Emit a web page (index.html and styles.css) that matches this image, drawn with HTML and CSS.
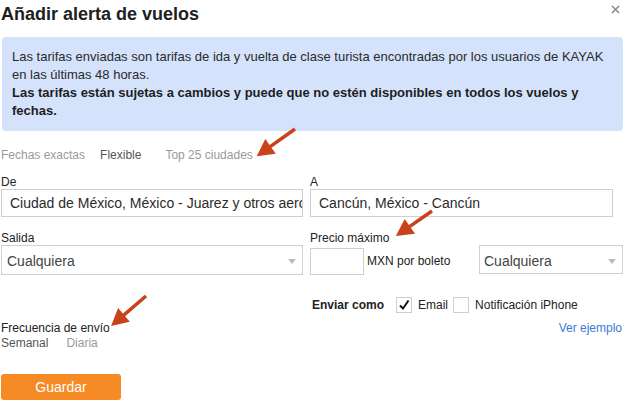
FILE: index.html
```html
<!DOCTYPE html>
<html lang="es">
<head>
  <meta charset="UTF-8">
  <title>Añadir alerta de vuelos</title>
  <link rel="stylesheet" href="styles.css">
</head>
<body>
  <div class="dialogo">
    <div class="cabecera">
      <h2>Añadir alerta de vuelos</h2>
      <svg class="cerrar" width="9" height="9" viewBox="0 0 9 9">
        <path d="M1 1 L8 8 M8 1 L1 8" stroke="#8c8c8c" stroke-width="1.6" />
      </svg>
    </div>

    <div class="aviso">
      Las tarifas enviadas son tarifas de ida y vuelta de clase turista encontradas por los usuarios de KAYAK<br>
      en las últimas 48 horas.<br>
      <strong>Las tarifas están sujetas a cambios y puede que no estén disponibles en todos los vuelos y<br>fechas.</strong>
    </div>

    <div class="pestanas">
      <span>Fechas exactas</span>
      <span class="activa">Flexible</span>
      <span>Top 25 ciudades</span>
    </div>

    <div class="rejilla">
      <div class="campo">
        <label>De</label>
        <div class="entrada">Ciudad de México, México - Juarez y otros aeropuertos</div>
      </div>
      <div class="campo">
        <label>A</label>
        <div class="entrada corta">Cancún, México - Cancún</div>
      </div>
    </div>

    <div class="rejilla fila-precio">
      <div class="campo">
        <label>Salida</label>
        <div class="selector">Cualquiera<span class="flecha"></span></div>
      </div>
      <div class="campo">
        <label>Precio máximo</label>
        <div class="precio">
          <div class="caja-precio"></div>
          <span class="moneda">MXN por boleto</span>
          <div class="selector chico">Cualquiera<span class="flecha"></span></div>
        </div>
      </div>
    </div>

    <div class="envio">
      <div class="canales">
        <b>Enviar como</b>
        <span class="casilla marcada">
          <svg width="12" height="12" viewBox="0 0 12 12"><path d="M2 6.5 L5 9.5 L10.5 1.5" fill="none" stroke="#111" stroke-width="2" /></svg>
        </span>
        <span>Email</span>
        <span class="casilla"></span>
        <span>Notificación iPhone</span>
      </div>
      <label class="frecuencia">Frecuencia de envío</label>
      <a class="ejemplo" href="#">Ver ejemplo</a>
      <div class="opciones">
        <span class="activa">Semanal</span>
        <span>Diaria</span>
      </div>
    </div>

    <button class="guardar">Guardar</button>

    <!-- flechas de anotación sobre la captura -->
    <svg class="flechas" width="631" height="402" viewBox="0 0 631 402">
      <g fill="#c8431b" stroke="#c8431b">
        <g transform="translate(295 129) rotate(144.6)">
          <line x1="0" y1="0" x2="33" y2="0" stroke-width="3.5" />
          <polygon points="47,0 30,-9 30,9" stroke="none" />
        </g>
        <g transform="translate(432 211) rotate(145.2)">
          <line x1="0" y1="0" x2="30" y2="0" stroke-width="3.5" />
          <polygon points="44,0 27,-9 27,9" stroke="none" />
        </g>
        <g transform="translate(146 296) rotate(139.4)">
          <line x1="0" y1="0" x2="32" y2="0" stroke-width="3.5" />
          <polygon points="46,0 29,-9 29,9" stroke="none" />
        </g>
      </g>
    </svg>
  </div>
</body>
</html>
```

FILE: styles.css
```css
html, body {
  margin: 0;
  padding: 0;
  background: #fff;
  font-family: "Liberation Sans", Arial, sans-serif;
  color: #222;
}

.dialogo {
  position: relative;
  width: 622px;
  height: 402px;
  padding-left: 1px;
}

.cabecera {
  display: flex;
  justify-content: space-between;
  align-items: flex-start;
  padding-top: 3px;
}

.cabecera h2 {
  margin: 0;
  font-size: 18px;
  line-height: 22px;
  font-weight: bold;
  color: #1e1e1e;
}

.cerrar {
  margin-top: 2px;
  margin-right: 3px;
}

.aviso {
  margin-top: 12px;
  margin-left: 1px;
  background: #d4e3fb;
  border-radius: 4px;
  padding: 11px 10px 11px 10px;
  font-size: 13px;
  line-height: 18px;
  color: #2a2a2a;
}

.aviso strong { color: #1e1e1e; }

.pestanas {
  display: flex;
  gap: 15px;
  margin-top: 16px;
  font-size: 12px;
  line-height: 16px;
  color: #9a9a9a;
}

.pestanas .activa { color: #555; margin-right: 9px; }

.rejilla {
  display: grid;
  grid-template-columns: 302px 1fr;
  column-gap: 7px;
  margin-top: 12px;
}

.campo label {
  display: block;
  font-size: 12px;
  line-height: 14px;
  margin-bottom: 0;
  color: #222;
}

.entrada {
  height: 26px;
  border: 1px solid #cfcfcf;
  padding: 0 8px;
  font-size: 14px;
  line-height: 27px;
  color: #2b2b2b;
  white-space: nowrap;
  overflow: hidden;
}

.entrada.corta { width: 285px; }

.fila-precio { margin-top: 14px; }

.selector {
  position: relative;
  height: 28px;
  border: 1px solid #d0d0d0;
  padding: 0 5px;
  font-size: 14px;
  line-height: 30px;
  color: #444;
}

.flecha {
  position: absolute;
  right: 6px;
  top: 13px;
  border-left: 4px solid transparent;
  border-right: 4px solid transparent;
  border-top: 5px solid #bdbdbd;
}

.precio {
  display: flex;
  align-items: center;
  height: 30px;
}

.caja-precio {
  width: 52px;
  height: 25px;
  border: 1px solid #cfcfcf;
  margin-top: 2px;
}

.moneda {
  font-size: 12px;
  margin-left: 3px;
  margin-top: 2px;
  width: 112px;
}

.selector.chico {
  flex: 1;
  height: 27px;
  margin-top: -1px;
  padding-left: 4px;
}

.envio {
  display: grid;
  grid-template-columns: 302px 1fr;
  grid-template-rows: 20px 14px 14px;
  column-gap: 7px;
  margin-top: 20px;
  font-size: 12px;
}

.canales {
  grid-column: 2;
  grid-row: 1;
  display: flex;
  align-items: center;
  padding-left: 2px;
  color: #222;
}

.canales b { margin-right: 12px; }

.casilla {
  display: inline-flex;
  align-items: center;
  justify-content: center;
  width: 14px;
  height: 14px;
  border: 1px solid #cfcfcf;
  margin-right: 6px;
  background: #fff;
}

.canales span + .casilla { margin-left: 5px; }

.frecuencia {
  grid-column: 1;
  grid-row: 2;
  line-height: 14px;
  margin-top: 6px;
}

.ejemplo {
  grid-column: 2;
  grid-row: 2;
  justify-self: end;
  margin-top: 6px;
  margin-right: 1px;
  line-height: 14px;
  color: #3a7ad6;
  text-decoration: none;
}

.opciones {
  grid-column: 1;
  grid-row: 3;
  display: flex;
  gap: 18px;
  margin-top: 7px;
  line-height: 14px;
  color: #9a9a9a;
}

.opciones .activa { color: #555; }

.guardar {
  display: block;
  margin-top: 31px;
  width: 120px;
  height: 26px;
  border: none;
  border-radius: 3px;
  background: #f68b26;
  color: #fff;
  font-family: "Liberation Sans", Arial, sans-serif;
  font-size: 14px;
  cursor: pointer;
}

.flechas {
  position: absolute;
  left: 0;
  top: 0;
  pointer-events: none;
}
```
